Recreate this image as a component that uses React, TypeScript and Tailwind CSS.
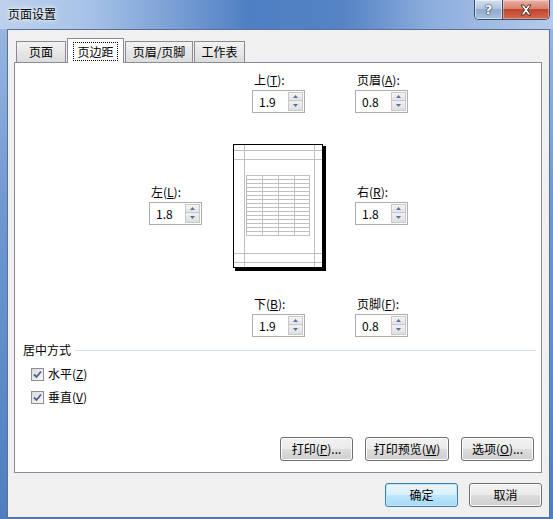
import type { ReactNode } from 'react'

const font = "font-['Noto_Sans_CJK_SC','Microsoft_YaHei',sans-serif]"

function Spin({ value }: { value: string }) {
  return (
    <div className="w-[53px] h-[23px] border border-[#abadb3] bg-white flex items-stretch">
      <span className="flex-1 pl-[6px] text-[12px] leading-[21px]">{value}</span>
      <div className="w-[15px] py-[1px] mr-[1px] flex flex-col">
        <div className="h-[9px] border border-[#c9c9c9] bg-[linear-gradient(180deg,#f4f4f4,#e4e4e4)] flex items-center justify-center">
          <svg width="5" height="3" viewBox="0 0 5 3">
            <path d="M0 3 L2.5 0 L5 3 Z" fill="#5670a8" />
          </svg>
        </div>
        <div className="h-[10px] border border-t-0 border-[#c9c9c9] bg-[linear-gradient(180deg,#f0f0f0,#e0e0e0)] flex items-center justify-center">
          <svg width="5" height="3" viewBox="0 0 5 3">
            <path d="M0 0 L5 0 L2.5 3 Z" fill="#5670a8" />
          </svg>
        </div>
      </div>
    </div>
  )
}

function Field({ label, value }: { label: ReactNode; value: string }) {
  return (
    <div className="flex flex-col">
      <div className="h-[16px] mb-[2px] pl-[2px] text-[12px] leading-[16px]">{label}</div>
      <Spin value={value} />
    </div>
  )
}

function Button({ children, w, primary }: { children: ReactNode; w: string; primary?: boolean }) {
  return (
    <div
      className={
        'h-[24px] rounded-[3px] border flex items-center justify-center text-[12px] ' +
        w +
        (primary
          ? ' border-[#3c7fb1] bg-[linear-gradient(180deg,#eaf6fd_0%,#d9f0fc_50%,#bee6fd_50%,#a7d9f5_100%)] shadow-[inset_0_0_0_1px_#c4e7f8]'
          : ' border-[#707070] bg-[linear-gradient(180deg,#f2f2f2_0%,#ebebeb_50%,#dddddd_50%,#cfcfcf_100%)] shadow-[inset_0_0_0_1px_#fcfcfc]')
      }
    >
      {children}
    </div>
  )
}

function Check({ children }: { children: ReactNode }) {
  return (
    <div className="h-[16px] flex items-center gap-[4px] text-[12px]">
      <div className="w-[13px] h-[13px] border border-[#8f8f8f] bg-[linear-gradient(135deg,#dcdcdc,#f6f6f6)] flex items-center justify-center">
        <svg width="9" height="9" viewBox="0 0 9 9">
          <path d="M1 4.5 L3.5 7 L8 1.5" stroke="#4d5f8e" strokeWidth="1.8" fill="none" />
        </svg>
      </div>
      <span className="leading-[16px]">{children}</span>
    </div>
  )
}

function PagePreview() {
  const rows = Array.from({ length: 16 }, (_, i) => 31.5 + i * 4)
  const cols = [13.5, 29.5, 45.5, 61.5, 76.5]
  return (
    <svg width="93" height="127" viewBox="0 0 93 127">
      <rect x="2" y="2" width="91" height="125" fill="#000" />
      <rect x="0.5" y="0.5" width="89" height="123" fill="#fff" stroke="#000" />
      {[11.5, 81.5].map((x) => (
        <line key={x} x1={x} y1="1" x2={x} y2="123" stroke="#c0c0c0" />
      ))}
      {[6.5, 15.5, 109.5, 118.5].map((y) => (
        <line key={y} x1="1" y1={y} x2="89" y2={y} stroke="#c0c0c0" />
      ))}
      {rows.map((y) => (
        <line key={y} x1="13" y1={y} x2="77" y2={y} stroke="#c0c0c0" />
      ))}
      {cols.map((x) => (
        <line key={x} x1={x} y1="31" x2={x} y2="92" stroke="#c0c0c0" />
      ))}
    </svg>
  )
}

export default function App() {
  return (
    <div
      className={
        'w-[553px] h-[519px] flex flex-col overflow-hidden text-black bg-[linear-gradient(180deg,#9dbbe3_0%,#6f98d0_40%,#4f7ebf_100%)] ' +
        font
      }
    >
      {/* title bar */}
      <div className="h-[29px] flex items-start bg-[linear-gradient(90deg,#bcd1ec_0%,#a9c4e8_15%,#7ea3d6_30%,#4f7fc3_45%,#5583c4_62%,#8daedd_78%,#b4cae9_100%)]">
        <div className="pl-[8px] pt-[6px] text-[12px] leading-[16px] [text-shadow:0_0_6px_#fff,0_0_3px_#fff]">页面设置</div>
        <div className="ml-auto mr-[3px] flex h-[20px] rounded-b-[5px] border border-t-0 border-[#3a4d6b] overflow-hidden">
          <div className="w-[28px] flex items-center justify-center border-r border-[#3a4d6b] bg-[linear-gradient(180deg,#d3dfee_0%,#b3c6e0_45%,#93abcc_50%,#a9c0de_100%)] shadow-[inset_0_0_0_1px_rgba(255,255,255,0.5)]">
            <span className="text-[13px] font-bold leading-none text-white [text-shadow:0_0_1px_#2b3a55,0_0_1px_#2b3a55,0_0_2px_#2b3a55] font-['DejaVu_Sans',sans-serif]">?</span>
          </div>
          <div className="w-[46px] flex items-center justify-center bg-[linear-gradient(180deg,#eab1a4_0%,#d88470_45%,#c4432b_50%,#d26a4d_100%)] shadow-[inset_0_0_0_1px_rgba(255,255,255,0.35)]">
            <svg width="14" height="12" viewBox="0 0 14 12">
              <path
                d="M2 1 L5 1 L7 4 L9 1 L12 1 L8.5 6 L12 11 L9 11 L7 8 L5 11 L2 11 L5.5 6 Z"
                fill="#fff"
                stroke="#3b2a2a"
                strokeWidth="0.9"
              />
            </svg>
          </div>
        </div>
      </div>

      {/* client area */}
      <div className="ml-[7px] w-[543px] flex-1 mb-[1px] border border-[#5a7099] bg-[#f0f0f0] flex flex-col pl-[6px] pt-[7px]">
        {/* tabs */}
        <div className="flex items-end pl-[2px] h-[25px] relative z-10 gap-[1px]">
          <div className="w-[50px] h-[21px] border border-b-0 border-[#898c95] bg-[linear-gradient(180deg,#f2f2f2,#dcdcdc)] flex items-center justify-center text-[12px]">页面</div>
          <div className="w-[57px] h-[25px] -mb-px border border-b-0 border-[#898c95] bg-white flex items-center justify-center text-[12px]">
            <span className="border border-dotted border-black px-[3px] leading-[17px]">页边距</span>
          </div>
          <div className="w-[68px] h-[21px] border border-b-0 border-[#898c95] bg-[linear-gradient(180deg,#f2f2f2,#dcdcdc)] flex items-center justify-center text-[12px]">页眉/页脚</div>
          <div className="w-[51px] h-[21px] border border-b-0 border-[#898c95] bg-[linear-gradient(180deg,#f2f2f2,#dcdcdc)] flex items-center justify-center text-[12px]">工作表</div>
        </div>

        {/* tab panel */}
        <div className="w-[528px] h-[411px] border border-[#898c95] bg-white flex flex-col">
          <div className="flex pl-[237px] gap-[50px] mt-[9px]">
            <Field label={<>上(<u>T</u>):</>} value="1.9" />
            <Field label={<>页眉(<u>A</u>):</>} value="0.8" />
          </div>

          <div className="flex items-start pl-[134px] mt-[31px]">
            <div className="mt-[40px]">
              <Field label={<>左(<u>L</u>):</>} value="1.8" />
            </div>
            <div className="ml-[31px]">
              <PagePreview />
            </div>
            <div className="ml-[29px] mt-[40px]">
              <Field label={<>右(<u>R</u>):</>} value="1.8" />
            </div>
          </div>

          <div className="flex pl-[237px] gap-[50px] mt-[25px]">
            <Field label={<>下(<u>B</u>):</>} value="1.9" />
            <Field label={<>页脚(<u>F</u>):</>} value="0.8" />
          </div>

          <div className="flex items-center gap-[4px] pl-[8px] pr-[5px] mt-[5px] h-[16px] text-[12px]">
            <span className="leading-[16px]">居中方式</span>
            <div className="flex-1 h-px bg-[#d5dfe5]" />
          </div>

          <div className="flex flex-col gap-[7px] pl-[16px] mt-[8px]">
            <Check>水平(<u>Z</u>)</Check>
            <Check>垂直(<u>V</u>)</Check>
          </div>

          <div className="mt-auto mb-[11px] mr-[7px] flex justify-end gap-[12px]">
            <Button w="w-[73px]">打印(<u>P</u>)...</Button>
            <Button w="w-[84px]">打印预览(<u>W</u>)</Button>
            <Button w="w-[73px]">选项(<u>O</u>)...</Button>
          </div>
        </div>

        <div className="flex justify-end gap-[11px] mt-[10px] pr-[7px]">
          <Button w="w-[73px]" primary>确定</Button>
          <Button w="w-[73px]">取消</Button>
        </div>
      </div>
    </div>
  )
}
